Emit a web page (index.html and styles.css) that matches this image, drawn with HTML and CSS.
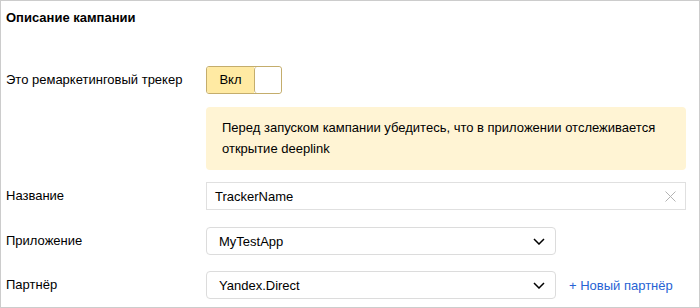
FILE: index.html
```html
<!DOCTYPE html>
<html>
<head>
<meta charset="utf-8">
<title>Описание кампании</title>
<link rel="stylesheet" href="styles.css">
</head>
<body>
<div class="panel">
<div class="panel-title">Описание кампании</div>

<div class="row row-toggle">
  <div class="label">Это ремаркетинговый трекер</div>
  <div class="control">
    <span class="toggle"><span class="toggle-text">Вкл</span><span class="toggle-knob"></span></span>
  </div>
</div>

<div class="row row-notice">
  <div class="label"></div>
  <div class="notice">Перед запуском кампании убедитесь, что в приложении отслеживается открытие deeplink</div>
</div>

<div class="row row-name">
  <div class="label">Название</div>
  <div class="input">
    <span class="input-text">TrackerName</span>
    <svg class="clear" width="11" height="11" viewBox="0 0 11 11"><path d="M0.5 0.5L10.5 10.5M10.5 0.5L0.5 10.5" stroke="#b3b3b3" stroke-width="1" fill="none"/></svg>
  </div>
</div>

<div class="row row-app">
  <div class="label">Приложение</div>
  <div class="select">
    <span class="select-text">MyTestApp</span>
    <svg class="chevron" width="12" height="7" viewBox="0 0 12 7"><path d="M1 1l5 5 5-5" stroke="#000" stroke-width="1.5" fill="none"/></svg>
  </div>
</div>

<div class="row row-partner">
  <div class="label">Партнёр</div>
  <div class="select">
    <span class="select-text">Yandex.Direct</span>
    <svg class="chevron" width="12" height="7" viewBox="0 0 12 7"><path d="M1 1l5 5 5-5" stroke="#000" stroke-width="1.5" fill="none"/></svg>
  </div>
  <a class="link" href="#">+ Новый партнёр</a>
</div>
</div>
</body>
</html>
```

FILE: styles.css
```css
/* Campaign description form */

body
{ margin: 0;
font-family: "Liberation Sans", Arial, sans-serif;
font-size: 13px;
color: #000;
background: #fff;
}

div.panel
{ box-sizing: border-box;
width: 700px;
height: 308px;
border: 1px solid #cccccc;
padding: 0 5px;
}

div.panel-title
{ margin-top: 8px;
line-height: 18px;
font-weight: bold;
}

div.row
{ display: flex;
align-items: center;
}

div.label
{ flex: 0 0 200px;
line-height: 28px;
}

.row-toggle { margin-top: 39px; }
.row-notice { margin-top: 13px; }
.row-name { margin-top: 12px; }
.row-app { margin-top: 17px; }
.row-partner { margin-top: 16px; }

/* Toggle */

span.toggle
{ display: flex;
box-sizing: border-box;
width: 76px;
height: 28px;
border: 1px solid #c4ad6c;
border-radius: 3px;
overflow: hidden;
}

span.toggle-text
{ flex: 0 0 47px;
background-color: #ffeaa3;
text-align: center;
line-height: 26px;
}

span.toggle-knob
{ flex: 1;
background: #fff;
border-left: 1px solid #c4ad6c;
border-radius: 3px;
}

/* Notice */

div.notice
{ box-sizing: border-box;
width: 480px;
height: 63px;
padding: 10px 16px;
background-color: #fff4d4;
border-radius: 4px;
line-height: 21px;
}

/* Inputs */

div.input
{ box-sizing: border-box;
display: flex;
align-items: center;
width: 480px;
height: 28px;
padding: 0 9px 0 8px;
border: 1px solid #e0e0e0;
}

span.input-text
{ flex: 1;
}

div.select
{ box-sizing: border-box;
display: flex;
align-items: center;
width: 350px;
height: 28px;
padding: 0 10px 0 12px;
border: 1px solid #dcdcdc;
border-radius: 4px;
}

span.select-text
{ flex: 1;
}

svg.chevron
{ display: block;
}

a.link
{ margin-left: 13px;
color: #2763d4;
text-decoration: none;
}
```
